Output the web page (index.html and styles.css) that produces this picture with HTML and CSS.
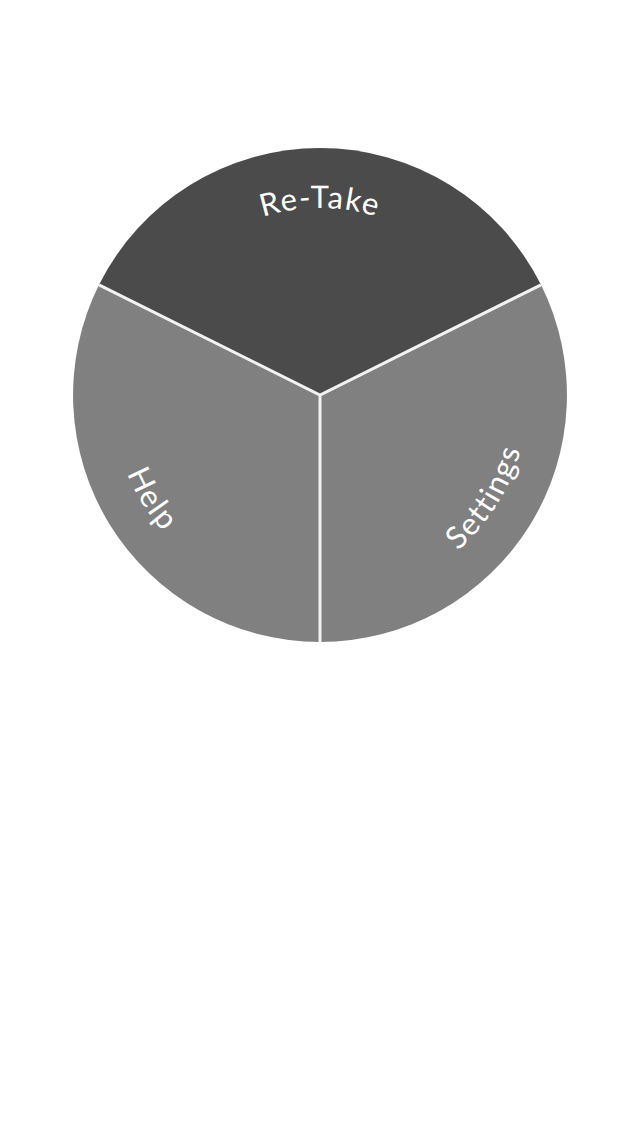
FILE: index.html
```html
<!DOCTYPE html>
<html lang="en">
<head>
    <meta charset="UTF-8">
    <meta name="viewport" content="width=device-width, initial-scale=1.0">
    <title>Menu</title>
    <link rel="stylesheet" href="styles.css">
</head>
<body>
    <div class="menu">
        <svg class="wheel" width="640" height="660" viewBox="0 0 640 660">
            <defs>
                <path id="arcTop" d="M133 395 A187 187 0 0 1 507 395"/>
                <path id="arcRight" d="M277.6 598.7 A208 208 0 0 0 483.4 266.2"/>
                <path id="arcLeft" d="M156.6 266.2 A208 208 0 0 0 362.4 598.7"/>
            </defs>
            <path class="slice slice-main" d="M320 395 L99 284.8 A247 247 0 0 1 541 284.8 Z"/>
            <path class="slice" d="M320 395 L541 284.8 A247 247 0 0 1 320 642 Z"/>
            <path class="slice" d="M320 395 L320 642 A247 247 0 0 1 99 284.8 Z"/>
            <path class="divider" d="M99 284.8 L320 395 L541 284.8 M320 395 L320 642"/>
            <text class="label"><textPath href="#arcTop" startOffset="50%">Re-Take</textPath></text>
            <text class="label"><textPath href="#arcRight" startOffset="50%">Settings</textPath></text>
            <text class="label"><textPath href="#arcLeft" startOffset="50%">Help</textPath></text>
        </svg>
    </div>
</body>
</html>
```

FILE: styles.css
```css
body {
    margin: 0;
    background-color: #fff;
    font-family: Lato, "Noto Sans", sans-serif;
}
.menu {
    width: 640px;
    height: 1136px;
}
.wheel {
    display: block;
}
.slice {
    fill: #808080;
}
.slice-main {
    fill: #4b4b4b;
}
.divider {
    fill: none;
    stroke: #f2f2f2;
    stroke-width: 3;
}
.label {
    fill: #fff;
    font-size: 31px;
    text-anchor: middle;
    letter-spacing: 1.5px;
}
```
